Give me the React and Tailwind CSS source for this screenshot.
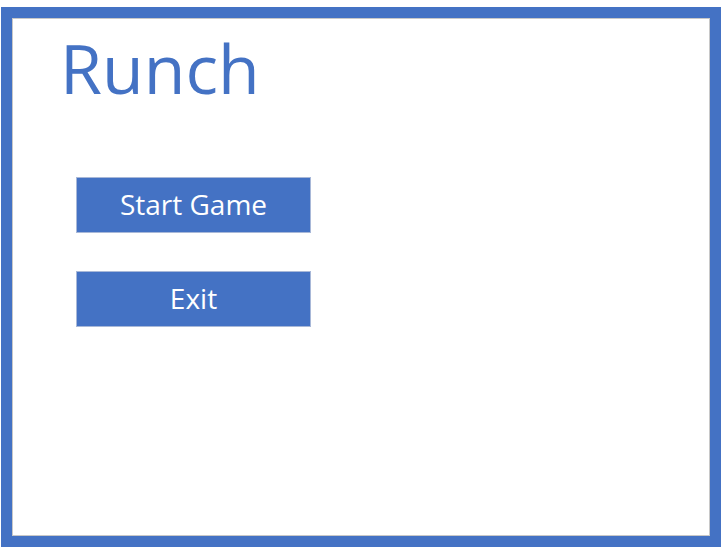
import React from 'react';

const App = () => {
  return (
    <div className="w-[722px] h-[548px] bg-white pt-[7px] pl-px" style={{ fontFamily: '"Open Sans", "Noto Sans", sans-serif' }}>
      <div className="w-[720px] h-[540px] border-[11px] border-[#4472c4] outline outline-1 outline-[#c8c8c8] -outline-offset-[12px]">
        <div className="flex flex-col pl-[48px]">
          <h1 className="text-[68px] leading-none text-[#4472c4] mt-[16px] h-[85px]">Runch</h1>
          <div className="flex flex-col gap-[38px] mt-[58px] pl-[16px]">
            <button className="w-[235px] h-[56px] bg-[#4472c4] border border-[#a8b8d8] text-white text-[28px] pb-[3px]">
              Start Game
            </button>
            <button className="w-[235px] h-[56px] bg-[#4472c4] border border-[#a8b8d8] text-white text-[28px] pb-[3px]">
              Exit
            </button>
          </div>
        </div>
      </div>
    </div>
  );
};

export default App;
